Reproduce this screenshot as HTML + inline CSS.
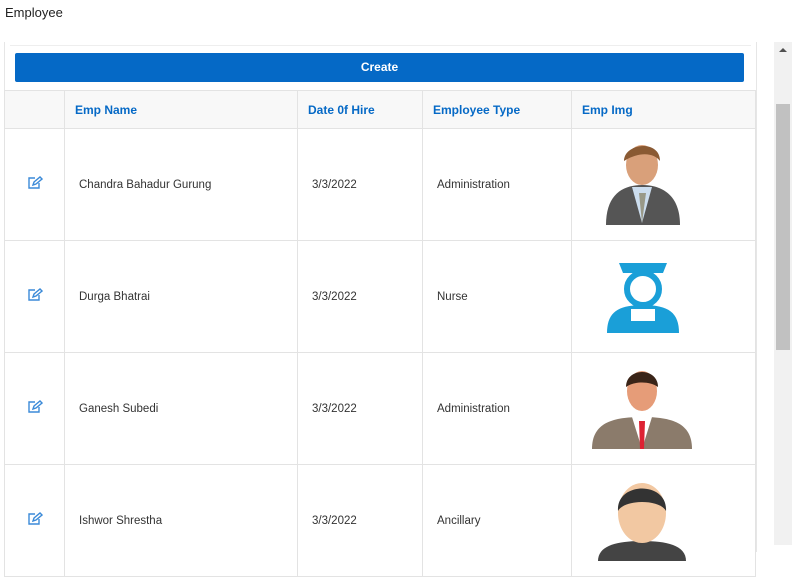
<!DOCTYPE html>
<html><head><style>
body{margin:0;width:792px;height:545px;overflow:hidden;background:#fff;font-family:"Liberation Sans",sans-serif;position:relative}
.t{position:absolute;left:5px;top:5px;font-size:13px;color:#222}
.box{position:absolute;left:4px;top:42px;width:751px;height:510px;border-left:1px solid #e6e6e6;border-right:1px solid #e6e6e6}
.topl{position:absolute;left:10px;top:45px;width:741px;height:1px;background:#eee}
.btn{position:absolute;left:15px;top:53px;width:729px;height:29px;background:#0569c6;border-radius:2px;color:#fff;font-weight:bold;font-size:12px;text-align:center;line-height:29px}
table{position:absolute;left:4px;top:90px;border-collapse:collapse;table-layout:fixed;width:752px;font-size:11.5px;color:#333}
td,th{border:1px solid #e3e3e3;padding:0;text-align:left;overflow:hidden;white-space:nowrap}
th{height:37px;background:#f8f8f8;color:#0569c6;font-size:12px;font-weight:bold;padding-left:10px}
th:first-child{padding:0}
td{height:111px;padding-left:14px}
td.e{padding:0;text-align:center}
.sb{position:absolute;left:774px;top:42px;width:18px;height:503px;background:#f1f1f1}
.th{position:absolute;left:776px;top:104px;width:14px;height:246px;background:#c1c1c1}
</style></head><body>
<div class="t">Employee</div>
<div class="box"></div>
<div class="topl"></div>
<div class="btn">Create</div>
<table>
<colgroup><col style="width:60px"><col style="width:233px"><col style="width:125px"><col style="width:149px"><col style="width:184px"></colgroup>
<tr><th></th><th>Emp Name</th><th>Date 0f Hire</th><th>Employee Type</th><th>Emp Img</th></tr>
<tr><td class="e"><svg width="16" height="14" viewBox="0 0 16 14"><path d="M8 2H2v10h10V7" fill="none" stroke="#3b8ad8" stroke-width="1.4"/><path d="M6 9l1-3 6-5 2 2-6 5z" fill="none" stroke="#3b8ad8" stroke-width="1.4"/></svg></td><td>Chandra Bahadur Gurung</td><td>3/3/2022</td><td>Administration</td>
<td class="e" style="text-align:left;padding-left:30px"><svg width="80" height="92" viewBox="0 0 80 92"><path d="M4 88c0-30 16-40 36-40s38 10 38 40z" fill="#555"/><path d="M30 50l10 36 10-36z" fill="#cde"/><path d="M37 56l3 30 4-30z" fill="#998"/><ellipse cx="40" cy="28" rx="16" ry="20" fill="#d9a07a"/><path d="M22 24c0-18 36-22 36 0-6-8-20-10-36 0z" fill="#8a5a33"/></svg></td></tr>
<tr><td class="e"><svg width="16" height="14" viewBox="0 0 16 14"><path d="M8 2H2v10h10V7" fill="none" stroke="#3b8ad8" stroke-width="1.4"/><path d="M6 9l1-3 6-5 2 2-6 5z" fill="none" stroke="#3b8ad8" stroke-width="1.4"/></svg></td><td>Durga Bhatrai</td><td>3/3/2022</td><td>Nurse</td>
<td class="e" style="text-align:left;padding-left:35px"><svg width="72" height="76" viewBox="0 0 72 76"><path d="M12 6h48l-4 10H16z" fill="#1a9fd8"/><circle cx="36" cy="32" r="16" fill="none" stroke="#1a9fd8" stroke-width="6"/><path d="M0 76c0-20 10-28 36-28s36 8 36 28z" fill="#1a9fd8"/><path d="M24 52h24v12H24z" fill="#fff"/></svg></td></tr>
<tr><td class="e"><svg width="16" height="14" viewBox="0 0 16 14"><path d="M8 2H2v10h10V7" fill="none" stroke="#3b8ad8" stroke-width="1.4"/><path d="M6 9l1-3 6-5 2 2-6 5z" fill="none" stroke="#3b8ad8" stroke-width="1.4"/></svg></td><td>Ganesh Subedi</td><td>3/3/2022</td><td>Administration</td>
<td class="e" style="text-align:left;padding-left:18px"><svg width="104" height="84" viewBox="0 0 104 84"><path d="M2 84c0-26 20-32 50-32s50 6 50 32z" fill="#8b7b6b"/><path d="M42 52l10 32 10-32z" fill="#fff"/><path d="M49 56h6l-1 28h-4z" fill="#d23"/><ellipse cx="52" cy="26" rx="15" ry="20" fill="#e69c78"/><path d="M36 22c0-20 32-20 32 0-8-6-24-6-32 0z" fill="#3a2418"/></svg></td></tr>
<tr><td class="e"><svg width="16" height="14" viewBox="0 0 16 14"><path d="M8 2H2v10h10V7" fill="none" stroke="#3b8ad8" stroke-width="1.4"/><path d="M6 9l1-3 6-5 2 2-6 5z" fill="none" stroke="#3b8ad8" stroke-width="1.4"/></svg></td><td>Ishwor Shrestha</td><td>3/3/2022</td><td>Ancillary</td>
<td class="e" style="text-align:left;padding-left:18px"><svg width="104" height="84" viewBox="0 0 104 84"><path d="M8 84c0-16 20-20 44-20s44 4 44 20z" fill="#444"/><ellipse cx="52" cy="36" rx="24" ry="30" fill="#f2c8a2"/><path d="M28 34c-2-30 50-30 48 0-6-12-42-12-48 0z" fill="#333"/></svg></td></tr>
</table>
<div class="sb"></div><div class="th"></div>
<svg style="position:absolute;left:779px;top:47px" width="8" height="6"><path d="M0 5L4 1 8 5z" fill="#505050"/></svg>
</body></html>
